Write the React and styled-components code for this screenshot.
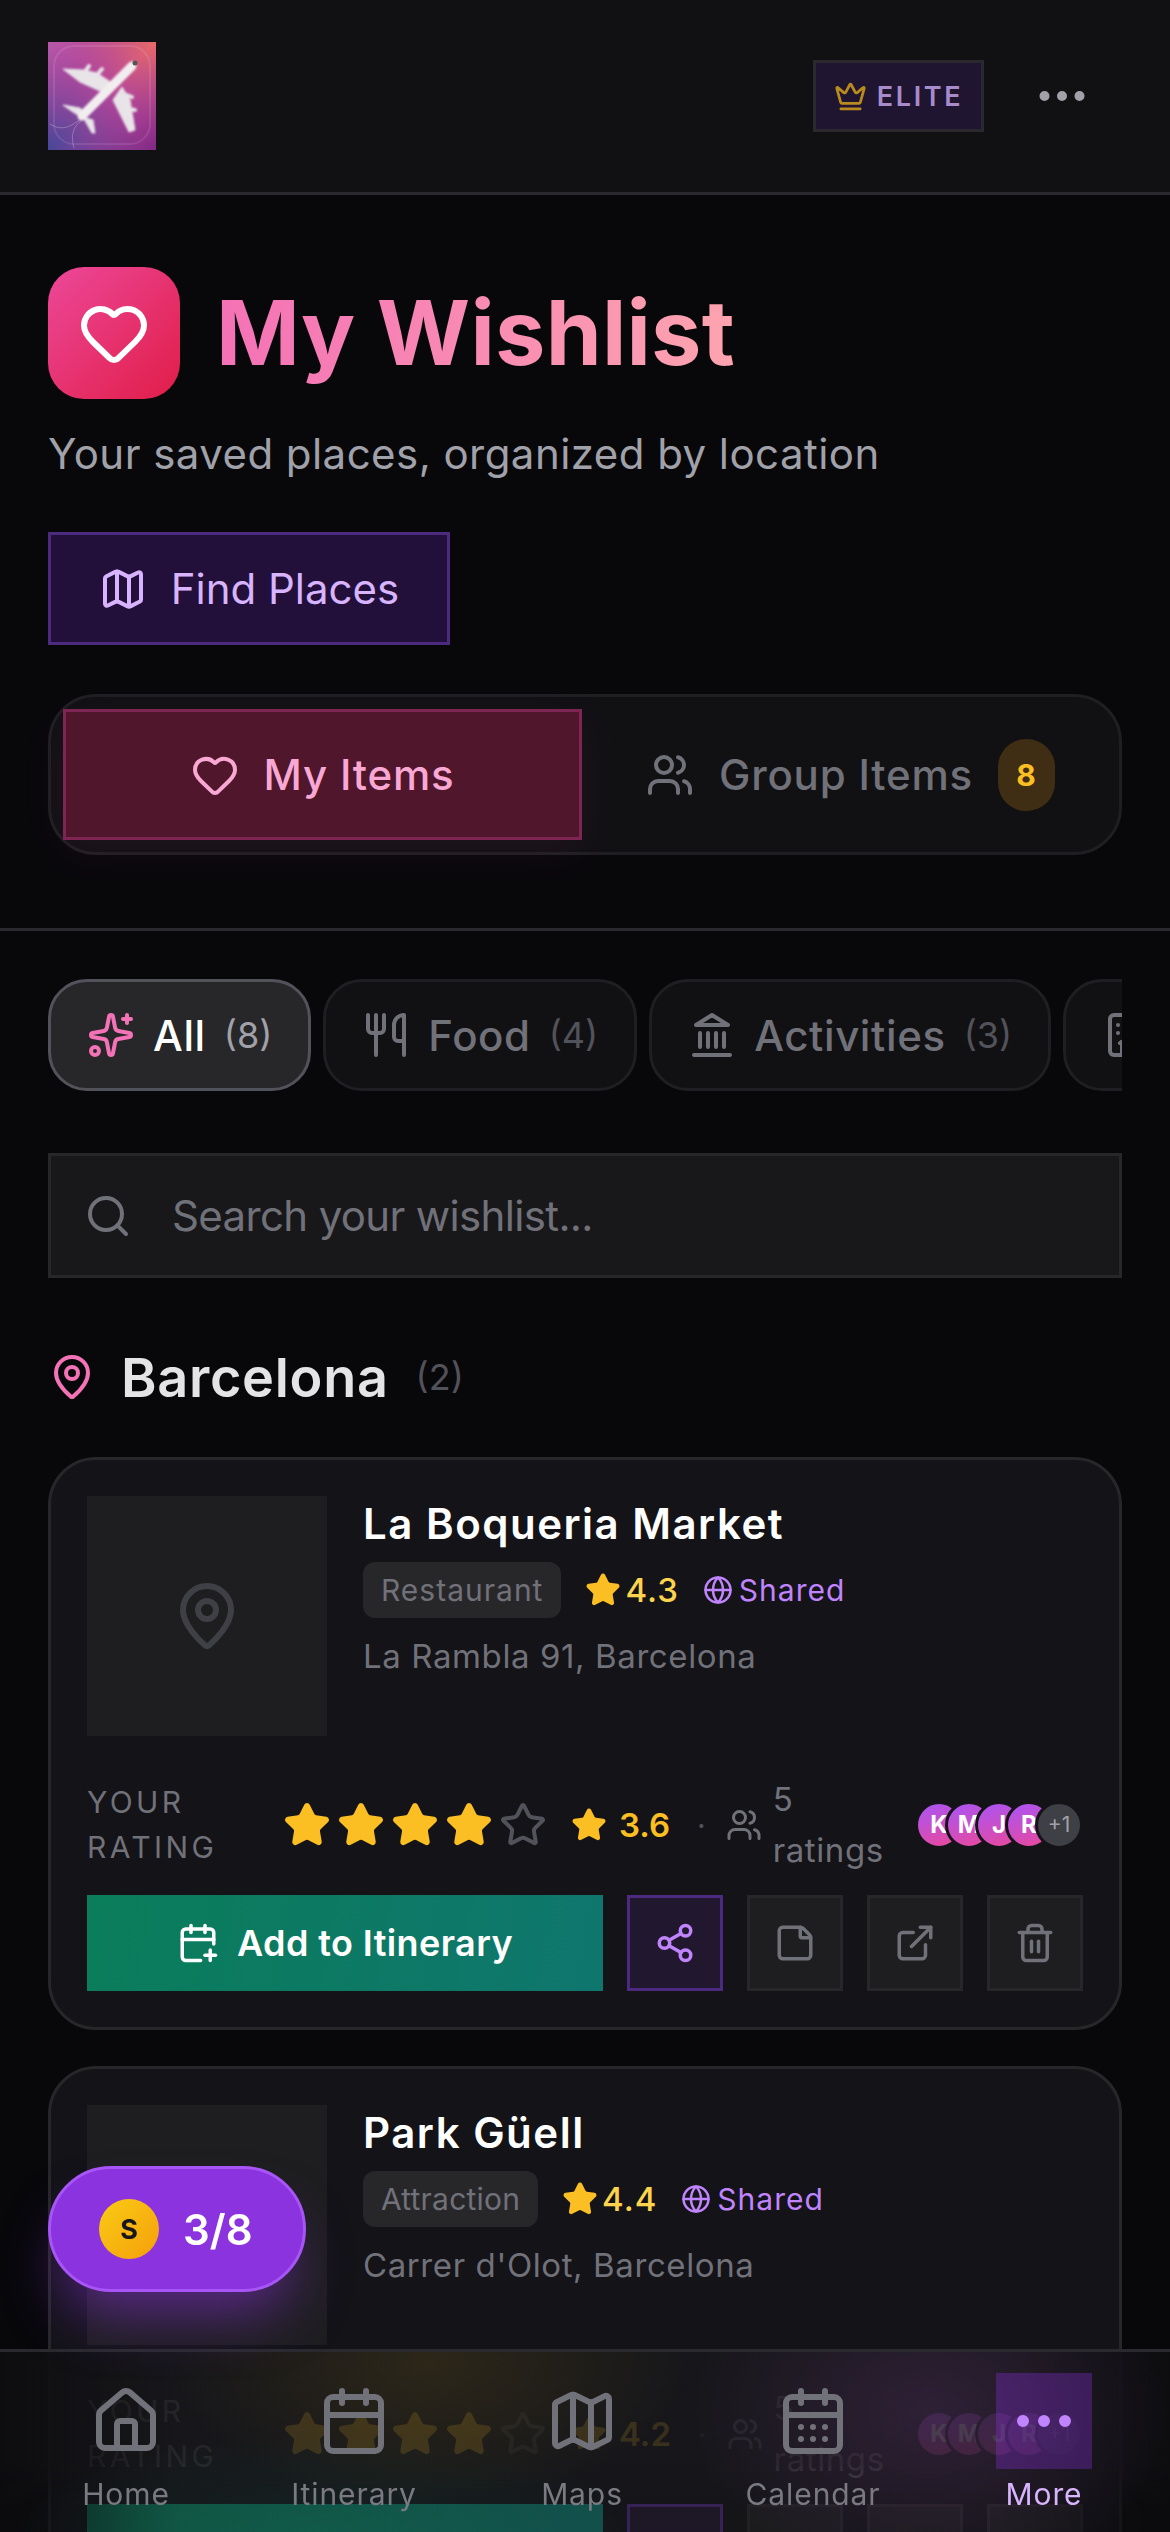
import React from 'react'
import styled, { createGlobalStyle } from 'styled-components'
import {
  Crown, Ellipsis, Heart, Map as MapIcon, Users, Sparkles, Utensils, Hotel, Search,
  MapPin, Star, Globe, CalendarPlus, Share2, StickyNote, ExternalLink, Trash2, House, Calendar, CalendarDays,
} from 'lucide-react'

const GlobalStyle = createGlobalStyle`
  html, body { margin: 0; padding: 0; background: #08080b; }
  body { font-family: Inter, "Liberation Sans", sans-serif; color: #fff; }
  * { box-sizing: border-box; }
`

const Page = styled.div`
  width: 1170px;
  height: 2532px;
  overflow: hidden;
  position: relative;
  background: #08080b;
`

const TopBar = styled.header`
  height: 195px;
  padding: 42px 48px 0;
  display: flex;
  justify-content: space-between;
  align-items: flex-start;
  background: #111114;
  border-bottom: 3px solid #2a2a2e;
`

const TopRight = styled.div`
  display: flex;
  align-items: center;
  height: 108px;
  gap: 48px;
  padding-right: 30px;
  color: #a1a1aa;
`

const EliteBadge = styled.div`
  width: 171px;
  height: 72px;
  display: flex;
  align-items: center;
  justify-content: center;
  gap: 10px;
  background: #1f1530;
  border: 3px solid #2a2a2e;
  color: #a78bcb;
  font-size: 27px;
  font-weight: 600;
  letter-spacing: 2.6px;
  svg { color: #b98a1e; }
`

const Hero = styled.section`
  padding: 72px 48px 73px;
  border-bottom: 3px solid #2a2a2e;
`

const TitleRow = styled.div`
  display: flex;
  align-items: center;
  gap: 36px;
`

const HeartTile = styled.div`
  width: 132px;
  height: 132px;
  border-radius: 36px;
  display: flex;
  align-items: center;
  justify-content: center;
  background: linear-gradient(135deg, #ec4899, #e11d48);
`

const Title = styled.h1`
  margin: 0;
  font-size: 90px;
  line-height: 108px;
  font-weight: 700;
  letter-spacing: 0.2px;
  background: linear-gradient(90deg, #f472b6, #fda4af);
  -webkit-background-clip: text;
  background-clip: text;
  color: transparent;
`

const Subtitle = styled.p`
  margin: 23px 0 0;
  font-size: 42px;
  line-height: 63px;
  letter-spacing: 0.45px;
  color: #a1a1aa;
`

const FindButton = styled.button`
  margin-top: 47px;
  width: 402px;
  height: 113px;
  display: flex;
  align-items: center;
  justify-content: center;
  gap: 24px;
  background: #22103a;
  border: 3px solid #4c2a80;
  color: #d8b4fe;
  font: 400 42px Inter, sans-serif;
  letter-spacing: 0;
`

const Segment = styled.div`
  margin-top: 49px;
  height: 161px;
  padding: 12px;
  display: grid;
  grid-template-columns: 519px 1fr;
  gap: 12px;
  background: #111114;
  border: 3px solid #1f1f23;
  border-radius: 48px;
`

const SegmentTab = styled.div`
  display: flex;
  align-items: center;
  justify-content: center;
  gap: 25px;
  font-size: 42px;
  font-weight: 500;
  letter-spacing: 0.8px;
  color: ${p => (p.$active ? '#f9a8d4' : '#71717a')};
  background: ${p => (p.$active ? '#4f162c' : 'transparent')};
  border: 3px solid ${p => (p.$active ? '#7f2554' : 'transparent')};
  box-shadow: ${p => (p.$active ? '0 12px 45px rgba(236, 72, 153, 0.07)' : 'none')};
`

const CountBadge = styled.span`
  width: 57px;
  height: 72px;
  display: flex;
  align-items: center;
  justify-content: center;
  border-radius: 28px;
  background: #3f2e14;
  color: #fbbf24;
  font-size: 30px;
  font-weight: 700;
`

const Content = styled.main`
  padding: 48px 48px 0;
`

const ChipRow = styled.div`
  display: flex;
  gap: 12px;
  overflow: hidden;
`

const Chip = styled.div`
  flex: none;
  height: 112px;
  padding: 0 36px;
  display: flex;
  align-items: center;
  gap: 18px;
  border-radius: 39px;
  font-size: 42px;
  font-weight: 500;
  letter-spacing: 0.6px;
  color: ${p => (p.$active ? '#fff' : '#71717a')};
  background: ${p => (p.$active ? '#27272a' : '#111114')};
  border: 3px solid ${p => (p.$active ? '#52525b' : '#1f1f23')};
  svg.spark { color: #f472b6; }
`

const ChipCount = styled.span`
  font-size: 36px;
  font-weight: 400;
  letter-spacing: 0;
  color: ${p => (p.$active ? '#a1a1aa' : '#52525b')};
`

const SearchBox = styled.label`
  margin-top: 62px;
  height: 125px;
  padding: 0 33px;
  display: flex;
  align-items: center;
  gap: 38px;
  background: #18181b;
  border: 3px solid #27272a;
  color: #71717a;
`

const SearchInput = styled.input`
  flex: 1;
  border: 0;
  outline: 0;
  background: transparent;
  font: 400 42px Inter, sans-serif;
  letter-spacing: -0.65px;
  color: #fff;
  &::placeholder { color: #71717a; opacity: 1; }
`

const CityRow = styled.div`
  margin-top: 66px;
  height: 66px;
  display: flex;
  align-items: center;
  color: #f472b6;
`

const CityName = styled.h2`
  margin: 0 0 0 25px;
  font-size: 54px;
  font-weight: 600;
  letter-spacing: 0.7px;
  color: #e4e4e7;
`

const CityCount = styled.span`
  margin-left: 27px;
  font-size: 36px;
  color: #52525b;
`

const CardList = styled.div`
  margin-top: 47px;
  display: flex;
  flex-direction: column;
  gap: 36px;
`

const Card = styled.article`
  padding: 36px;
  background: #131318;
  border: 3px solid #27272a;
  border-radius: 48px;
`

const CardTop = styled.div`
  display: flex;
  gap: 36px;
`

const Thumb = styled.div`
  width: 240px;
  height: 240px;
  flex: none;
  display: flex;
  align-items: center;
  justify-content: center;
  background: #1e1e20;
  color: #3f3f46;
`

const PlaceName = styled.h3`
  margin: 4px 0 0;
  font-size: 42px;
  line-height: 48px;
  font-weight: 600;
  letter-spacing: 1.5px;
  color: #fff;
`

const MetaRow = styled.div`
  margin-top: 14px;
  display: flex;
  align-items: center;
`

const TypeTag = styled.span`
  height: 56px;
  padding: 0 18px;
  display: flex;
  align-items: center;
  border-radius: 12px;
  background: #27272a;
  color: #71717a;
  font-size: 30px;
  letter-spacing: ${p => p.$spacing}px;
`

const Score = styled.span`
  margin-left: 24px;
  display: flex;
  align-items: center;
  gap: 4px;
  color: #fcd34d;
  font-size: 33px;
  font-weight: 500;
  letter-spacing: 1px;
`

const Shared = styled.span`
  margin-left: 24px;
  display: flex;
  align-items: center;
  gap: 6px;
  color: #c084fc;
  font-size: 30px;
  letter-spacing: 1px;
`

const Address = styled.p`
  margin: 17px 0 0;
  font-size: 33px;
  line-height: 42px;
  letter-spacing: 0.6px;
  color: #71717a;
`

const RatingRow = styled.div`
  margin-top: 47px;
  height: 83px;
  display: flex;
  align-items: center;
`

const RatingLabel = styled.span`
  width: 196px;
  flex: none;
  font-size: 30px;
  line-height: 45px;
  letter-spacing: 3.4px;
  color: #71717a;
`

const Stars = styled.div`
  display: flex;
  gap: 6px;
`

const AvgScore = styled.span`
  margin-left: 24px;
  display: flex;
  align-items: center;
  gap: 12px;
  color: #fbbf24;
  font-size: 33px;
  font-weight: 600;
`

const Dot = styled.span`
  margin: 0 20px 0 27px;
  font-size: 30px;
  color: #52525b;
`

const RatingCount = styled.span`
  width: 110px;
  margin-left: 11px;
  font-size: 33px;
  line-height: 51px;
  letter-spacing: 0.6px;
  color: #71717a;
`

const People = styled.div`
  margin-left: auto;
  display: flex;
`

const Face = styled.span`
  width: 48px;
  height: 48px;
  margin-left: -18px;
  display: flex;
  align-items: center;
  justify-content: center;
  border-radius: 50%;
  border: 3px solid #131318;
  background: ${p => (p.$more ? '#3f3f46' : 'linear-gradient(160deg, #a855f7, #ec4899)')};
  color: ${p => (p.$more ? '#a1a1aa' : '#fff')};
  font-size: ${p => (p.$more ? '21px' : '24px')};
  font-weight: ${p => (p.$more ? 400 : 700)};
  &:first-child { margin-left: 0; }
`

const Actions = styled.div`
  margin-top: 29px;
  display: flex;
  gap: 24px;
`

const AddButton = styled.button`
  flex: 1;
  height: 96px;
  display: flex;
  align-items: center;
  justify-content: center;
  gap: 18px;
  border: 0;
  background: linear-gradient(100deg, #0a7d5a, #0f766e);
  color: #fff;
  font: 600 36px Inter, sans-serif;
  letter-spacing: 0.4px;
`

const IconButton = styled.button`
  width: 96px;
  height: 96px;
  padding: 0;
  flex: none;
  display: flex;
  align-items: center;
  justify-content: center;
  background: ${p => (p.$accent ? '#21172f' : '#1e1e20')};
  border: 3px solid ${p => (p.$accent ? '#4c2a80' : '#27272a')};
  color: ${p => (p.$accent ? '#c084fc' : '#71717a')};
`

const ProgressPill = styled.div`
  position: fixed;
  left: 48px;
  top: 2166px;
  width: 258px;
  height: 126px;
  z-index: 3;
  display: flex;
  align-items: center;
  gap: 24px;
  padding-left: 48px;
  border-radius: 63px;
  background: #8b33de;
  border: 3px solid #a855f7;
  box-shadow: 0 36px 56px -14px rgba(147, 51, 234, 0.5);
  font-size: 42px;
  font-weight: 600;
`

const Coin = styled.span`
  width: 60px;
  height: 60px;
  display: flex;
  align-items: center;
  justify-content: center;
  border-radius: 50%;
  background: linear-gradient(135deg, #facc15, #f59e0b);
  color: #18181b;
  font-size: 27px;
  font-weight: 700;
`

const BottomNav = styled.nav`
  position: fixed;
  left: 0;
  right: 0;
  bottom: 0;
  height: 183px;
  z-index: 2;
  border-top: 3px solid #2a2a2e;
  display: flex;
  background:
    radial-gradient(240px 170px at 930px 60px, rgba(190, 85, 220, 0.14), transparent),
    radial-gradient(260px 140px at 430px 10px, rgba(234, 179, 8, 0.1), transparent),
    radial-gradient(320px 110px at 330px 190px, rgba(16, 185, 129, 0.09), transparent),
    linear-gradient(90deg, rgba(10, 10, 13, 0.7), transparent 15%, transparent 85%, rgba(10, 10, 13, 0.7)),
    linear-gradient(180deg, rgba(24, 24, 27, 0.86) 62%, rgba(24, 24, 27, 0.42) 85%);
`

const NavItem = styled.div`
  position: absolute;
  top: 21px;
  left: ${p => p.$center - 90}px;
  width: 180px;
  display: flex;
  flex-direction: column;
  align-items: center;
  color: ${p => (p.$active ? '#d8b4fe' : '#7a7a82')};
`

const NavIcon = styled.span`
  width: 96px;
  height: 96px;
  display: flex;
  align-items: center;
  justify-content: center;
  background: ${p => (p.$active ? 'rgba(147, 51, 234, 0.3)' : 'transparent')};
  color: ${p => (p.$active ? '#c084fc' : '#71717a')};
`

const NavLabel = styled.span`
  margin-top: 4px;
  font-size: 30px;
  line-height: 42px;
  letter-spacing: 0.9px;
`

const Logo = () => (
  <svg width="108" height="108" viewBox="0 0 108 108">
    <defs>
      <linearGradient id="logoA" x1="1" y1="0" x2="0" y2="1">
        <stop offset="0" stopColor="#ea6a68" />
        <stop offset="0.45" stopColor="#b4479a" />
        <stop offset="1" stopColor="#45479a" />
      </linearGradient>
      <linearGradient id="logoB" x1="0" y1="0" x2="1" y2="1">
        <stop offset="0" stopColor="#c060b0" stopOpacity="0.7" />
        <stop offset="0.5" stopColor="#a03c98" stopOpacity="0" />
        <stop offset="1" stopColor="#7d2580" stopOpacity="0.9" />
      </linearGradient>
      <filter id="soft"><feGaussianBlur stdDeviation="0.9" /></filter>
    </defs>
    <rect width="108" height="108" fill="url(#logoA)" />
    <rect width="108" height="108" fill="url(#logoB)" />
    <rect x="6" y="4" width="96" height="98" rx="20" fill="none" stroke="#fff" strokeOpacity="0.1" strokeWidth="2" />
    <path d="M2 82 C14 90 24 84 34 76 M26 106 C22 92 26 84 34 78" fill="none" stroke="#fff" strokeOpacity="0.25" strokeWidth="1" />
    <g filter="url(#soft)" fill="#e8e4e8" stroke="#e8e4e8">
      <path d="M36 31 L41 24 M49 33 L54 27 M76 52 L84 55 M80 67 L87 68" strokeWidth="4" strokeLinecap="round" />
      <path d="M15 27 L35 28 L49 31 L64 41 L52 49 L32 40 Z" strokeWidth="1" />
      <path d="M74 45 L82 58 L87 88 L81 90 L65 58 Z" strokeWidth="1" />
      <path d="M15 63 L32 66 L38 72 L33 75 L25 70 Z" strokeWidth="1" />
      <path d="M35 75 L45 78 L47 91 L44 91 Z" strokeWidth="1" />
      <path d="M34 74 L84 24" stroke="#f2eef0" strokeWidth="9" strokeLinecap="round" />
    </g>
    <circle cx="87" cy="21" r="2.5" fill="#555" />
  </svg>
)

// lucide's newer landmark has a wider roof, this is the narrow one from the picture
const LandmarkIcon = () => (
  <svg width="48" height="48" viewBox="0 0 24 24" fill="none" stroke="currentColor" strokeWidth="2" strokeLinecap="round" strokeLinejoin="round">
    <line x1="3" y1="22" x2="21" y2="22" />
    <line x1="6" y1="18" x2="6" y2="11" />
    <line x1="10" y1="18" x2="10" y2="11" />
    <line x1="14" y1="18" x2="14" y2="11" />
    <line x1="18" y1="18" x2="18" y2="11" />
    <polygon points="12 2 20 7 4 7" />
  </svg>
)

const Place = ({ name, type, typeSpacing, score, address, mine, average }) => (
  <Card>
    <CardTop>
      <Thumb><MapPin size={72} /></Thumb>
      <div>
        <PlaceName>{name}</PlaceName>
        <MetaRow>
          <TypeTag $spacing={typeSpacing}>{type}</TypeTag>
          <Score><Star size={36} fill="#fbbf24" color="#fbbf24" />{score}</Score>
          <Shared><Globe size={30} />Shared</Shared>
        </MetaRow>
        <Address>{address}</Address>
      </div>
    </CardTop>
    <RatingRow>
      <RatingLabel>YOUR RATING</RatingLabel>
      <Stars>
        {[1, 2, 3, 4, 5].map(n => (
          n <= mine
            ? <Star key={n} size={48} fill="#fbbf24" color="#fbbf24" />
            : <Star key={n} size={48} color="#52525b" />
        ))}
      </Stars>
      <AvgScore><Star size={36} fill="#fbbf24" color="#fbbf24" />{average}</AvgScore>
      <Dot>·</Dot>
      <Users size={36} color="#71717a" />
      <RatingCount>5 ratings</RatingCount>
      <People>
        {['K', 'M', 'J', 'R'].map(l => <Face key={l}>{l}</Face>)}
        <Face $more>+1</Face>
      </People>
    </RatingRow>
    <Actions>
      <AddButton><CalendarPlus size={42} />Add to Itinerary</AddButton>
      <IconButton $accent><Share2 size={42} /></IconButton>
      <IconButton><StickyNote size={42} /></IconButton>
      <IconButton><ExternalLink size={42} /></IconButton>
      <IconButton><Trash2 size={42} /></IconButton>
    </Actions>
  </Card>
)

const navItems = [
  { label: 'Home', center: 126, Icon: House },
  { label: 'Itinerary', center: 354, Icon: Calendar },
  { label: 'Maps', center: 582, Icon: MapIcon },
  { label: 'Calendar', center: 813, Icon: CalendarDays },
  { label: 'More', center: 1044, Icon: Ellipsis, active: true },
]

export default function App() {
  return (
    <Page>
      <GlobalStyle />
      <TopBar>
        <Logo />
        <TopRight>
          <EliteBadge><Crown size={33} />ELITE</EliteBadge>
          <Ellipsis size={60} />
        </TopRight>
      </TopBar>

      <Hero>
        <TitleRow>
          <HeartTile><Heart size={72} color="#fff" /></HeartTile>
          <Title>My Wishlist</Title>
        </TitleRow>
        <Subtitle>Your saved places, organized by location</Subtitle>
        <FindButton><MapIcon size={48} />Find Places</FindButton>
        <Segment>
          <SegmentTab $active><Heart size={48} />My Items</SegmentTab>
          <SegmentTab><Users size={48} />Group Items<CountBadge>8</CountBadge></SegmentTab>
        </Segment>
      </Hero>

      <Content>
        <ChipRow>
          <Chip $active><Sparkles className="spark" size={48} />All<ChipCount $active>(8)</ChipCount></Chip>
          <Chip><Utensils size={48} />Food<ChipCount>(4)</ChipCount></Chip>
          <Chip><LandmarkIcon />Activities<ChipCount>(3)</ChipCount></Chip>
          <Chip><Hotel size={48} /></Chip>
        </ChipRow>
        <SearchBox>
          <Search size={48} />
          <SearchInput placeholder="Search your wishlist..." />
        </SearchBox>
        <CityRow>
          <MapPin size={48} />
          <CityName>Barcelona</CityName>
          <CityCount>(2)</CityCount>
        </CityRow>
        <CardList>
          <Place name="La Boqueria Market" type="Restaurant" typeSpacing={1} score="4.3" address="La Rambla 91, Barcelona" mine={4} average="3.6" />
          <Place name="Park Güell" type="Attraction" typeSpacing={0.2} score="4.4" address="Carrer d'Olot, Barcelona" mine={4} average="4.2" />
        </CardList>
      </Content>

      <ProgressPill><Coin>S</Coin>3/8</ProgressPill>

      <BottomNav>
        {navItems.map(({ label, center, Icon, active }) => (
          <NavItem key={label} $center={center} $active={active}>
            <NavIcon $active={active}><Icon size={72} /></NavIcon>
            <NavLabel>{label}</NavLabel>
          </NavItem>
        ))}
      </BottomNav>
    </Page>
  )
}
